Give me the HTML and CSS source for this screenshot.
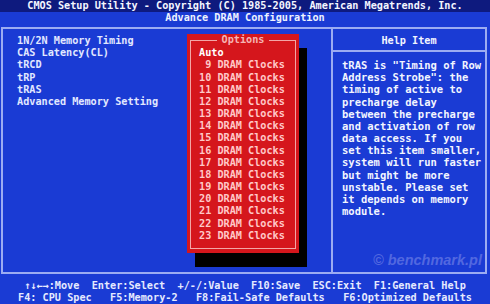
FILE: index.html
```html
<!DOCTYPE html>
<html>
<head>
  <meta charset="UTF-8">
  <title>CMOS Setup Utility - Advance DRAM Configuration</title>
  <link rel="stylesheet" href="styles.css">
</head>
<body>
  <div class="title">CMOS Setup Utility - Copyright (C) 1985-2005, American Megatrends, Inc.</div>
  <div class="subtitle">Advance DRAM Configuration</div>

  <div class="frame">
    <div class="settings">
      <div class="item">1N/2N Memory Timing</div>
      <div class="item">CAS Latency(CL)</div>
      <div class="item">tRCD</div>
      <div class="item">tRP</div>
      <div class="item">tRAS</div>
      <div class="item">Advanced Memory Setting</div>
    </div>

    <div class="help">
      <div class="help-head">Help Item</div>
      <div class="help-body">
        <div>tRAS is "Timing of Row</div>
        <div>Address Strobe": the</div>
        <div>timing of active to</div>
        <div>precharge delay</div>
        <div>between the precharge</div>
        <div>and activation of row</div>
        <div>data access. If you</div>
        <div>set this item smaller,</div>
        <div>system will run faster</div>
        <div>but might be more</div>
        <div>unstable. Please set</div>
        <div>it depends on memory</div>
        <div>module.</div>
      </div>
      <div class="watermark">© benchmark.pl</div>
    </div>

    <!-- options popup lies over the settings list -->
    <div class="popup">
      <div class="popup-box">
        <div class="popup-title"><span>Options</span></div>
        <div class="opt selected">Auto</div>
        <div class="opt"> 9 DRAM Clocks</div>
        <div class="opt">10 DRAM Clocks</div>
        <div class="opt">11 DRAM Clocks</div>
        <div class="opt">12 DRAM Clocks</div>
        <div class="opt">13 DRAM Clocks</div>
        <div class="opt">14 DRAM Clocks</div>
        <div class="opt">15 DRAM Clocks</div>
        <div class="opt">16 DRAM Clocks</div>
        <div class="opt">17 DRAM Clocks</div>
        <div class="opt">18 DRAM Clocks</div>
        <div class="opt">19 DRAM Clocks</div>
        <div class="opt">20 DRAM Clocks</div>
        <div class="opt">21 DRAM Clocks</div>
        <div class="opt">22 DRAM Clocks</div>
        <div class="opt">23 DRAM Clocks</div>
      </div>
    </div>
  </div>

  <div class="footer">
    <div class="keys">↑↓←→:Move  Enter:Select  +/-/:Value  F10:Save  ESC:Exit  F1:General Help</div>
    <div class="keys">F4: CPU Spec   F5:Memory-2   F8:Fail-Safe Defaults   F6:Optimized Defaults</div>
  </div>
</body>
</html>
```

FILE: styles.css
```css
body {
  margin: 0;
  width: 490px;
  height: 304px;
  overflow: hidden;
  background-color: #1a3bd4;
  color: #e2e8ff;
  font-family: "DejaVu Sans Mono", "Liberation Mono", monospace;
  font-weight: bold;
  font-size: 10.2px;
  line-height: 12.16px;
}

.title {
  background-color: #0e1a7e;
  color: #f4f6ff;
  text-align: center;
  height: 12px;
}

.subtitle {
  text-align: center;
  color: #eef2ff;
}

.frame {
  position: relative;
  display: flex;
  height: 247px;
  box-sizing: border-box;
  margin: 3px 3px 0 1px;
  border: 2px solid #9cacf2;
}

.settings {
  flex: 1;
  padding: 6px 14px;
}

.help {
  width: 152px;
  border-left: 2px solid #9cacf2;
  display: flex;
  flex-direction: column;
  color: #f2f5ff;
}

.help-head {
  height: 23px;
  box-sizing: border-box;
  padding-top: 6px;
  text-align: center;
  border-bottom: 2px solid #9cacf2;
}

.help-body {
  padding: 7px 0 0 9px;
  font-size: 10.5px;
}

.help-body div {
  white-space: pre;
}

.watermark {
  margin-top: auto;
  padding: 0 3px 4px 0;
  text-align: right;
  font-family: "Liberation Sans", Arial, sans-serif;
  font-style: italic;
  font-size: 14.5px;
  line-height: 16px;
  color: #5268e0;
}

/* popup with its drop shadow */
.popup {
  position: absolute;
  left: 184px;
  top: 5px;
  width: 112px;
  height: 219px;
  box-sizing: border-box;
  padding: 6px 3px 4px;
  background-color: #d5161c;
  box-shadow: 8px 14px 0 #000;
  color: #ffc8c8;
}

.popup-box {
  height: 100%;
  box-sizing: border-box;
  border: 1px solid #f3a6a6;
  padding-left: 8px;
}

.popup-title {
  margin: -7px 0 1px -8px;
  text-align: center;
  color: #f6b4b4;
}

.popup-title span {
  background-color: #d5161c;
  padding: 0 5px;
}

.opt {
  white-space: pre;
}

.opt.selected {
  color: #ffffff;
}

.footer {
  margin-top: 6px;
  text-align: center;
  color: #e6eaff;
}

.keys {
  white-space: pre;
}
```
